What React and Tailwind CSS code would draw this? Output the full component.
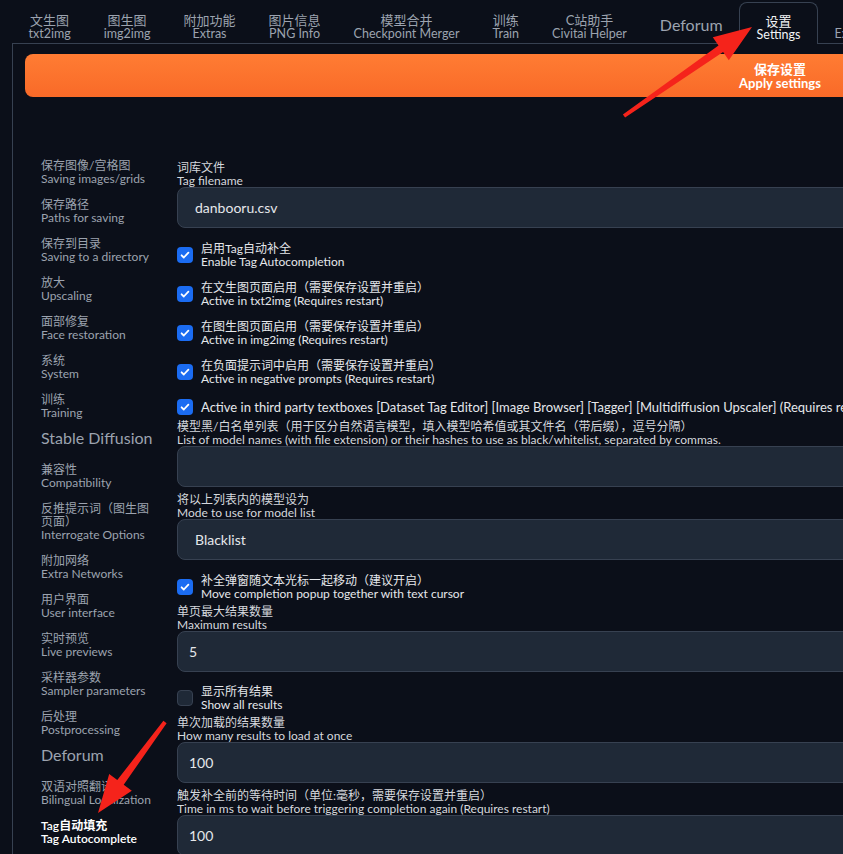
import React from 'react';

// Top navigation tabs of the webui
const tabs = [
    { zh: '文生图', en: 'txt2img' },
    { zh: '图生图', en: 'img2img' },
    { zh: '附加功能', en: 'Extras' },
    { zh: '图片信息', en: 'PNG Info' },
    { zh: '模型合并', en: 'Checkpoint Merger' },
    { zh: '训练', en: 'Train' },
    { zh: 'C站助手', en: 'Civitai Helper' },
    { single: 'Deforum' },
    { zh: '设置', en: 'Settings', active: true },
    { zh: '扩展', en: 'Extensions' },
];

// Left settings menu; headers are plain section titles
const menu = [
    { zh: '保存图像/宫格图', en: 'Saving images/grids' },
    { zh: '保存路径', en: 'Paths for saving' },
    { zh: '保存到目录', en: 'Saving to a directory' },
    { zh: '放大', en: 'Upscaling' },
    { zh: '面部修复', en: 'Face restoration' },
    { zh: '系统', en: 'System' },
    { zh: '训练', en: 'Training' },
    { header: 'Stable Diffusion' },
    { zh: '兼容性', en: 'Compatibility' },
    { zh: '反推提示词（图生图页面）', en: 'Interrogate Options' },
    { zh: '附加网络', en: 'Extra Networks' },
    { zh: '用户界面', en: 'User interface' },
    { zh: '实时预览', en: 'Live previews' },
    { zh: '采样器参数', en: 'Sampler parameters' },
    { zh: '后处理', en: 'Postprocessing' },
    { header: 'Deforum' },
    { zh: '双语对照翻译', en: 'Bilingual Localization' },
    { zh: 'Tag自动填充', en: 'Tag Autocomplete', active: true },
];

const Label = ({ zh, en, className = '' }) => (
    <div className={`text-[12px] leading-[13px] text-[#d5d8dd] whitespace-nowrap ${className}`}>
        <div>{zh}</div>
        <div>{en}</div>
    </div>
);

const Field = ({ children, pad = 'pl-[17px]' }) => (
    <div className={`h-[41px] rounded-lg border border-[#374151] bg-[#1f2937] flex items-center text-[14px] text-[#e5e7eb] ${pad}`}>
        {children}
    </div>
);

const Box = ({ checked = true }) =>
    checked ? (
        <span className="w-4 h-4 shrink-0 rounded-[4px] bg-[#1b6cf2] flex items-center justify-center">
            <svg width="16" height="16" viewBox="0 0 16 16" fill="none">
                <path d="M4.6 8.3l2.2 2.2 4.6-4.8" stroke="#fff" strokeWidth="1.8" strokeLinecap="round" strokeLinejoin="round" />
            </svg>
        </span>
    ) : (
        <span className="w-4 h-4 shrink-0 rounded-[4px] bg-[#1f2937] border border-[#374151]" />
    );

const Check = ({ zh, en, checked, className = '' }) => (
    <div className={`flex items-center gap-2 ${className}`}>
        <Box checked={checked} />
        <div className="text-[12px] leading-[13px] text-[#e5e7eb] whitespace-nowrap">
            <div>{zh}</div>
            <div>{en}</div>
        </div>
    </div>
);

export default function App() {
    return (
        <div
            className="relative w-[843px] h-[854px] overflow-hidden bg-[#0b0f19]"
            style={{ fontFamily: 'Lato, "Noto Sans CJK SC", sans-serif' }}
        >
            <div className="w-[1540px]">
                {/* tab strip */}
                <nav className="ml-3 flex pt-[2px] border-b border-[#374151]">
                    {tabs.map((t) => (
                        <div
                            key={t.en || t.single}
                            className={`h-[41px] px-[16.5px] pt-[9px] flex flex-col items-center justify-center text-center whitespace-nowrap ${
                                t.active
                                    ? 'border border-b-0 border-[#374151] rounded-t-lg bg-[#0b0f19] -mb-px h-[42px] text-[#f3f4f6]'
                                    : 'text-[#9ca3af]'
                            }`}
                        >
                            {t.single ? (
                                <span className="text-[16px] leading-5 -mt-[5px]">{t.single}</span>
                            ) : (
                                <>
                                    <span className="text-[13px] leading-[14px]">{t.zh}</span>
                                    <span className="text-[12.5px] leading-[14px]">{t.en}</span>
                                </>
                            )}
                        </div>
                    ))}
                </nav>

                <div className="ml-3 border-l border-[#374151] pl-3 pt-[10px] pb-10">
                    <button
                        type="button"
                        className="w-[1510px] h-[43px] rounded-lg bg-gradient-to-b from-[#ff7c33] to-[#f96a28] flex flex-col items-center justify-center text-white font-bold text-[13px] leading-[14px]"
                    >
                        <span>保存设置</span>
                        <span>Apply settings</span>
                    </button>

                    <div className="flex mt-[62px]">
                        {/* settings menu */}
                        <aside className="ml-4 w-[114px] shrink-0 flex flex-col">
                            {menu.map((m) =>
                                m.header ? (
                                    <div key={m.header} className="-mt-1 mb-[15px] text-[16px] leading-5 text-[#9ca3af] whitespace-nowrap">
                                        {m.header}
                                    </div>
                                ) : (
                                    <div
                                        key={m.en}
                                        className={`mb-[13px] text-[12px] leading-[13px] ${
                                            m.active ? 'text-white font-semibold' : 'text-[#9ca3af]'
                                        }`}
                                    >
                                        <div>{m.zh}</div>
                                        <div className="whitespace-nowrap">{m.en}</div>
                                    </div>
                                )
                            )}
                        </aside>

                        {/* Tag Autocomplete settings */}
                        <section className="ml-[22px] flex-1 pt-[2px] flex flex-col">
                            <Label zh="词库文件" en="Tag filename" />
                            <Field>danbooru.csv</Field>

                            <Check className="mt-[14px]" zh="启用Tag自动补全" en="Enable Tag Autocompletion" />
                            <Check className="mt-[13px]" zh="在文生图页面启用（需要保存设置并重启）" en="Active in txt2img (Requires restart)" />
                            <Check className="mt-[13px]" zh="在图生图页面启用（需要保存设置并重启）" en="Active in img2img (Requires restart)" />
                            <Check className="mt-[13px]" zh="在负面提示词中启用（需要保存设置并重启）" en="Active in negative prompts (Requires restart)" />
                            <div className="mt-[14px] flex items-center gap-2">
                                <Box />
                                <span className="text-[13px] leading-4 text-[#e5e7eb] whitespace-nowrap">
                                    Active in third party textboxes [Dataset Tag Editor] [Image Browser] [Tagger] [Multidiffusion Upscaler] (Requires restart)
                                </span>
                            </div>

                            <Label
                                className="mt-[5px]"
                                zh="模型黑/白名单列表（用于区分自然语言模型，填入模型哈希值或其文件名（带后缀），逗号分隔）"
                                en="List of model names (with file extension) or their hashes to use as black/whitelist, separated by commas."
                            />
                            <Field />

                            <Label className="mt-[6px]" zh="将以上列表内的模型设为" en="Mode to use for model list" />
                            <Field>Blacklist</Field>

                            <Check
                                className="mt-[14px]"
                                zh="补全弹窗随文本光标一起移动（建议开启）"
                                en="Move completion popup together with text cursor"
                            />

                            <Label className="mt-[5px]" zh="单页最大结果数量" en="Maximum results" />
                            <Field pad="pl-[11px]">5</Field>

                            <Check className="mt-[13px]" checked={false} zh="显示所有结果" en="Show all results" />

                            <Label className="mt-[5px]" zh="单次加载的结果数量" en="How many results to load at once" />
                            <Field pad="pl-[11px]">100</Field>

                            <Label
                                className="mt-[6px]"
                                zh="触发补全前的等待时间（单位:毫秒，需要保存设置并重启）"
                                en="Time in ms to wait before triggering completion again (Requires restart)"
                            />
                            <Field pad="pl-[11px]">100</Field>
                        </section>
                    </div>
                </div>
            </div>

            {/* red annotation arrows laid over the screenshot */}
            <svg className="absolute inset-0 pointer-events-none" width="843" height="854" viewBox="0 0 843 854">
                <polygon
                    fill="#f5231b"
                    points="622.9,114.4 718.5,45.4 712.8,37.2 752,27 728.8,60.2 723.1,52 625.1,117.6"
                />
                <polygon
                    fill="#f5231b"
                    points="163.4,720.8 117.3,780 109.2,774.1 98,813 131.8,790.7 123.7,784.8 166.6,723.2"
                />
            </svg>
        </div>
    );
}
